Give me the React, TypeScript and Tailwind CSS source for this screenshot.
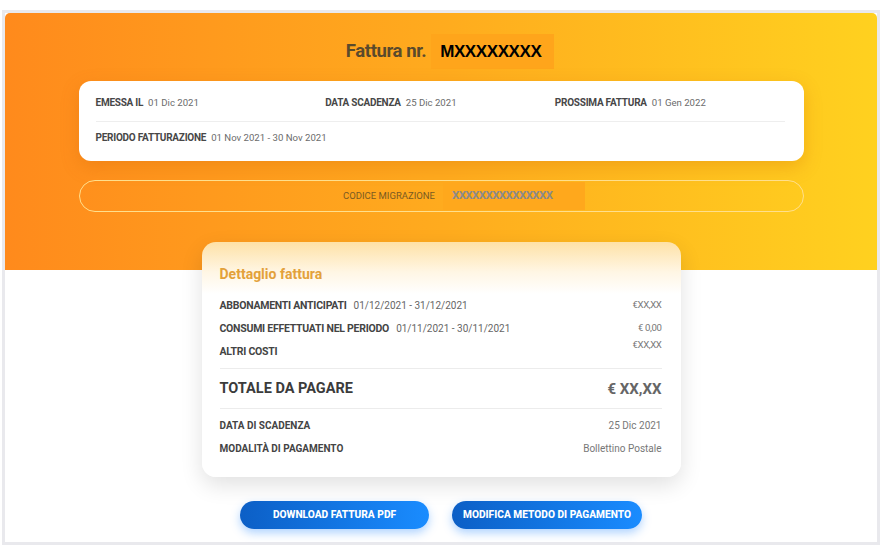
import React from 'react';

// Invoice summary page: orange header with meta card, detail card, action buttons

const sans = { fontFamily: 'Roboto, "Noto Sans", Arial, sans-serif' };
const arial = { fontFamily: '"Liberation Sans", Arial, sans-serif' };

const InfoItem = ({ label, value }: { label: string; value: string }) => (
  <div className="flex items-center gap-[5px] leading-[14px]">
    <span className="text-[10px] font-bold text-[#474747] tracking-[-0.25px]">{label}</span>
    <span className="text-[9.6px] text-[#6b6b6b]">{value}</span>
  </div>
);

const DetailRow = ({
  label,
  period,
  amount,
  raised = false,
}: {
  label: string;
  period?: string;
  amount: string;
  raised?: boolean;
}) => (
  <div className="flex items-center justify-between h-[23px]">
    <div className="flex items-center gap-[7px]">
      <span className="text-[10.5px] font-bold text-[#444] tracking-[-0.25px]">{label}</span>
      {period && <span className="text-[10px] text-[#666]">{period}</span>}
    </div>
    <span className={`text-[9.6px] text-[#777] tracking-[-0.4px] ${raised ? '-mt-[12px]' : ''}`}>{amount}</span>
  </div>
);

export default function App() {
  return (
    <div className="w-[887px] h-[554px] bg-white" style={sans}>
      <div className="ml-[2px] mt-[10px] w-[878px] h-[535px] border-[3px] border-[#e9e9ed] bg-white">
        {/* Header */}
        <div className="h-[257px] rounded-t-[5px] bg-linear-to-r from-[#ff8a1c] via-[#ffab1e] to-[#ffd11f] flex flex-col items-center">
          <div className="pt-[21px] pl-[18px] flex items-center h-[56px]">
            <span className="text-[18.5px] font-bold text-[#5a4a2c] tracking-[-0.4px]">Fattura nr.</span>
            <span
              className="ml-[5px] h-[35px] w-[123px] pl-[9px] flex items-center bg-[#ffa51b] text-[17px] font-bold text-black tracking-[-0.4px]"
              style={arial}
            >
              MXXXXXXXX
            </span>
          </div>

          <div className="mt-[12px] w-[725px] h-[80px] rounded-[12px] bg-white shadow-[0_6px_18px_rgba(200,90,0,0.25)] px-[17px] pt-[15px]">
            <div className="grid grid-cols-3 pr-[2px]">
              <InfoItem label="EMESSA IL" value="01 Dic 2021" />
              <InfoItem label="DATA SCADENZA" value="25 Dic 2021" />
              <InfoItem label="PROSSIMA FATTURA" value="01 Gen 2022" />
            </div>
            <div className="mt-[11px] mr-[2px] border-t border-[#eeeeee]" />
            <div className="pt-[9px]">
              <InfoItem label="PERIODO FATTURAZIONE" value="01 Nov 2021 - 30 Nov 2021" />
            </div>
          </div>

          <div className="mt-[19px] w-[725px] h-[32px] rounded-full border border-[#ffdf8c] flex items-center justify-center">
            <span className="ml-[46px] text-[9.5px] text-[#7a5a22]">CODICE MIGRAZIONE</span>
            <span className="ml-[8px] h-[28px] w-[142px] pl-[9px] flex items-center bg-[#ffa81c] text-[11.5px] font-bold text-[#8c8a88] tracking-[-0.6px]">
              XXXXXXXXXXXXXXX
            </span>
          </div>
        </div>

        {/* Body */}
        <div className="flex flex-col items-center">
          <div className="-mt-[28px] w-[479px] h-[235px] rounded-[14px] bg-[linear-gradient(to_bottom,#fee1a6_0px,#fff6e4_30px,#ffffff_52px)] shadow-[0_8px_22px_rgba(0,0,0,0.12)] pl-[18px] pr-[19px]">
            <div className="pt-[22px] h-[52px] text-[14px] font-bold text-[#e3a13a]">Dettaglio fattura</div>
            <DetailRow label="ABBONAMENTI ANTICIPATI" period="01/12/2021 - 31/12/2021" amount="€XX,XX" />
            <DetailRow label="CONSUMI EFFETTUATI NEL PERIODO" period="01/11/2021 - 30/11/2021" amount="€ 0,00" />
            <DetailRow label="ALTRI COSTI" amount="€XX,XX" raised />
            <div className="mt-[5px] border-t border-[#ececec]" />
            <div className="flex items-center justify-between h-[39px]">
              <span className="text-[14.5px] font-bold text-[#3b3b3b]">TOTALE DA PAGARE</span>
              <span className="text-[15px] font-bold text-[#666] mt-[2px]">€ XX,XX</span>
            </div>
            <div className="border-t border-[#ececec]" />
            <div className="pt-[5px]">
              <div className="flex items-center justify-between h-[23px] text-[10px]">
                <span className="font-bold text-[#444]">DATA DI SCADENZA</span>
                <span className="text-[#777]">25 Dic 2021</span>
              </div>
              <div className="flex items-center justify-between h-[23px] text-[10px]">
                <span className="font-bold text-[#444]">MODALITÀ DI PAGAMENTO</span>
                <span className="text-[#777]">Bollettino Postale</span>
              </div>
            </div>
          </div>

          <div className="mt-[24px] flex gap-[23px]">
            <button className="w-[189px] h-[28px] rounded-full bg-linear-to-r from-[#0c5fc6] to-[#1a8cff] text-white text-[10.2px] font-extrabold shadow-[0_4px_10px_rgba(26,130,255,0.35)]">
              DOWNLOAD FATTURA PDF
            </button>
            <button className="w-[190px] h-[28px] rounded-full bg-linear-to-r from-[#0c5fc6] to-[#1a8cff] text-white text-[10.2px] font-extrabold shadow-[0_4px_10px_rgba(26,130,255,0.35)]">
              MODIFICA METODO DI PAGAMENTO
            </button>
          </div>
        </div>
      </div>
    </div>
  );
}
